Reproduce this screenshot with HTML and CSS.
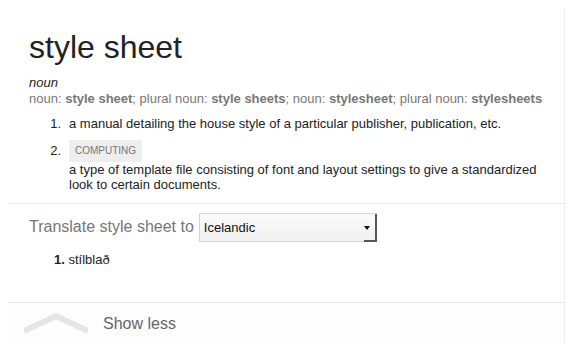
FILE: index.html
```
<!DOCTYPE html>
<html lang="en">
<head>
    <meta charset="UTF-8">
    <title>style sheet</title>
    <link rel="stylesheet" href="styles.css">
</head>
<body>
    <div class="card">
        <div class="definition">
            <h1 class="word">style sheet</h1>
            <div class="pos">noun</div>
            <div class="forms">noun: <b>style sheet</b>; plural noun: <b>style sheets</b>; noun: <b>stylesheet</b>; plural noun: <b>stylesheets</b></div>

            <div class="senses">
                <div class="sense">
                    <div class="sense-num">1.</div>
                    <div class="sense-text">a manual detailing the house style of a particular publisher, publication, etc.</div>
                </div>
                <div class="sense">
                    <div class="sense-num tall">2.</div>
                    <div class="sense-text">
                        <span class="label">COMPUTING</span>
                        <div class="gloss">a type of template file consisting of font and layout settings to give a standardized look to certain documents.</div>
                    </div>
                </div>
            </div>
        </div>

        <div class="translate">
            <div class="translate-row">
                <span class="translate-label">Translate style sheet to</span>
                <div class="select-wrap">
                    <select class="lang-select">
                        <option>Icelandic</option>
                    </select>
                </div>
            </div>
            <div class="result"><b>1.</b> stílblað</div>
        </div>

        <div class="footer">
            <svg class="chevron" width="64" height="22" viewBox="0 0 64 22">
                <polyline points="0,19 32,4 64,19" fill="none" stroke="#e5e5e5" stroke-width="6"/>
            </svg>
            <span class="show-less">Show less</span>
        </div>
    </div>
</body>
</html>
```

FILE: styles.css
```
:root {
    --text-color: #222222;
    --muted: #777777;
    --line: #e8e8e8;
}

body {
    font-family: 'Liberation Sans', Arial, sans-serif;
    background: #ffffff;
    margin: 8px;
    color: var(--text-color);
}

.card {
    width: 556px;
    background: #ffffff;
    box-shadow: 0 1px 5px rgba(0,0,0,0.16);
}

.definition {
    padding: 19px 21px 11px;
    border-bottom: 1px solid var(--line);
}

.word {
    margin: 0;
    font-size: 32px;
    font-weight: normal;
    line-height: 40px;
}

.pos {
    margin-top: 8px;
    font-size: 13px;
    font-style: italic;
    line-height: 16px;
}

.forms {
    font-size: 13px;
    line-height: 16px;
    color: var(--muted);
}

.senses {
    margin-top: 9px;
    font-size: 13px;
}

.sense {
    display: flex;
    gap: 8px;
    line-height: 16px;
}

.sense + .sense {
    margin-top: 8px;
}

.sense-num {
    width: 32px;
    text-align: right;
    flex-shrink: 0;
}

.sense-num.tall {
    line-height: 22px;
}

.label {
    display: inline-block;
    background: #eeeeee;
    color: var(--muted);
    font-size: 10px;
    line-height: 22px;
    padding: 0 6px;
}

.gloss {
    line-height: 15px;
}

.translate {
    padding: 9px 21px 34px;
    border-bottom: 1px solid var(--line);
}

.translate-row {
    display: flex;
    align-items: baseline;
    gap: 5px;
}

.translate-label {
    font-size: 16px;
    color: var(--muted);
}

.select-wrap {
    position: relative;
}

.lang-select {
    appearance: none;
    -webkit-appearance: none;
    width: 178px;
    height: 29px;
    margin: 0;
    padding: 0 20px 0 4px;
    border: 1px solid #d4d4d4;
    border-radius: 0;
    background: linear-gradient(#fbfbfb, #f1f1f1);
    font-family: 'Liberation Sans', Arial, sans-serif;
    font-size: 13px;
    color: #111111;
}

.select-wrap::after {
    content: "";
    position: absolute;
    right: 0;
    bottom: 0;
    top: 1px;
    width: 13px;
    border-right: 2px solid #555555;
    border-bottom: 2px solid #555555;
    box-sizing: border-box;
    pointer-events: none;
}

.select-wrap::before {
    content: "";
    position: absolute;
    right: 7px;
    top: 13px;
    border-left: 3px solid transparent;
    border-right: 3px solid transparent;
    border-top: 4px solid #111111;
    pointer-events: none;
}

.result {
    margin-top: 10px;
    padding-left: 25px;
    font-size: 13px;
    line-height: 16px;
}

.footer {
    display: flex;
    align-items: center;
    gap: 15px;
    height: 40px;
    padding-left: 16px;
    background: #fdfdfd;
}

.chevron {
    display: block;
}

.show-less {
    font-size: 16px;
    color: #666666;
    padding-top: 1px;
}
```
